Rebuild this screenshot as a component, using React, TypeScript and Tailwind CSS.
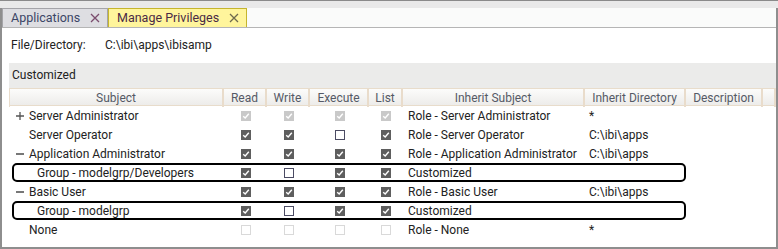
import React from "react";

type Cb = "c" | "u" | "dc" | "du";

function Check({ v }: { v: Cb }) {
  if (v === "c" || v === "dc") {
    const bg = v === "c" ? "bg-[#5e5e5e]" : "bg-[#c9c9c9]";
    return (
      <div className={`w-[10px] h-[10px] ${bg} flex items-center justify-center`}>
        <svg width="8" height="8" viewBox="0 0 8 8">
          <path d="M1.2 4.2 L3.2 6 L6.8 1.8" stroke="#fff" strokeWidth="1.4" fill="none" />
        </svg>
      </div>
    );
  }
  const bd = v === "u" ? "border-[#4b4b63]" : "border-[#d9d9d9]";
  return <div className={`w-[10px] h-[10px] bg-white border ${bd}`} />;
}

function XIcon({ color }: { color: string }) {
  return (
    <svg width="10" height="10" viewBox="0 0 10 10">
      <path d="M1 1 L9 9 M9 1 L1 9" stroke={color} strokeWidth="1.3" />
    </svg>
  );
}

const cols = "grid grid-cols-[215px_43px_43px_59px_34px_182px_101px_77px_13px]";

type Row = {
  mark?: "+" | "-";
  indent?: boolean;
  name: string;
  cb: [Cb, Cb, Cb, Cb];
  inh: string;
  dir: string;
  boxed?: boolean;
};

const rows: Row[] = [
  { mark: "+", name: "Server Administrator", cb: ["dc", "dc", "dc", "dc"], inh: "Role - Server Administrator", dir: "*" },
  { name: "Server Operator", cb: ["c", "c", "u", "c"], inh: "Role - Server Operator", dir: "C:\\ibi\\apps" },
  { mark: "-", name: "Application Administrator", cb: ["c", "c", "c", "c"], inh: "Role - Application Administrator", dir: "C:\\ibi\\apps" },
  { indent: true, name: "Group - modelgrp/Developers", cb: ["c", "u", "c", "c"], inh: "Customized", dir: "", boxed: true },
  { mark: "-", name: "Basic User", cb: ["c", "c", "c", "c"], inh: "Role - Basic User", dir: "C:\\ibi\\apps" },
  { indent: true, name: "Group - modelgrp", cb: ["c", "u", "c", "c"], inh: "Customized", dir: "", boxed: true },
  { name: "None", cb: ["du", "du", "du", "du"], inh: "Role - None", dir: "*" },
];

const headers = ["Subject", "Read", "Write", "Execute", "List", "Inherit Subject", "Inherit Directory", "Description", ""];

export default function App() {
  return (
    <div className="w-[778px] h-[249px] bg-white overflow-hidden font-['Roboto','Liberation_Sans',sans-serif] text-[12px] text-[#222]">
      <div className="h-[8px] border-t border-[#8a8a8a] bg-[#e9e9e9]" />
      <div className="h-[241px] border-l-2 border-r-2 border-b-2 border-[#8e8e8e] flex flex-col">
        {/* tab bar */}
        <div className="h-[20px] bg-[#fafbfa] border-b border-[#b5b5b5] flex items-stretch">
          <div className="w-[106px] bg-[#dedee2] border border-b-0 border-[#a4a4a8] flex items-center pl-[8px] pr-[7px] justify-between text-[12.5px] text-[#3b4666]">
            <span>Applications</span>
            <XIcon color="#7b4d6e" />
          </div>
          <div className="w-[139px] bg-[#fff59c] border border-b-0 border-[#c5b52e] flex items-center pl-[8px] pr-[7px] justify-between text-[12.5px] text-[#4a2a45]">
            <span>Manage Privileges</span>
            <XIcon color="#6e6a4e" />
          </div>
        </div>
        {/* file row */}
        <div className="h-[35px] pt-[10px] pl-[9px] flex leading-[14px]">
          <span className="w-[94px]">File/Directory:</span>
          <span>C:\ibi\apps\ibisamp</span>
        </div>
        {/* section */}
        <div className="ml-[7px]">
          <div className="h-[25px] bg-[#ebebea] flex items-center pl-[3px] pt-[-2px]">
            <span className="relative top-[-1px]">Customized</span>
          </div>
          <div className={`${cols} h-[18px] border-t border-b border-[#e8dccb] bg-linear-to-b from-[#fcfcfb] to-[#edecea] text-[#555a66]`}>
            {headers.map((h, i) => (
              <div
                key={i}
                className={`flex items-center justify-center border-r-2 border-[#e9dccb] ${i === 0 ? "border-l" : ""} ${i === 8 ? "border-r-0" : ""}`}
              >
                {h}
              </div>
            ))}
          </div>
          {rows.map((r, i) => (
            <div key={i} className={`${cols} h-[19px] items-center relative`}>
              <div className="flex items-center">
                <span className="w-[20px] flex justify-center pl-[2px] text-[#555]">
                  {r.mark === "+" ? (
                    <svg width="8" height="8" viewBox="0 0 8 8">
                      <path d="M0 4 H8 M4 0 V8" stroke="#555" strokeWidth="1.3" />
                    </svg>
                  ) : r.mark === "-" ? (
                    <svg width="8" height="8" viewBox="0 0 8 8">
                      <path d="M0 4 H8" stroke="#555" strokeWidth="1.6" />
                    </svg>
                  ) : null}
                </span>
                <span className={r.indent ? "pl-[8px]" : ""}>{r.name}</span>
              </div>
              {r.cb.map((c, j) => (
                <div key={j} className="flex justify-center">
                  <Check v={c} />
                </div>
              ))}
              <div className="pl-[5px] whitespace-nowrap">{r.inh}</div>
              <div className="pl-[4px]">{r.dir}</div>
              <div />
              <div />
              {r.boxed && (
                <div className="absolute left-[3px] top-0 w-[674px] h-[19px] border-2 border-black rounded-[5px] pointer-events-none" />
              )}
            </div>
          ))}
        </div>
      </div>
    </div>
  );
}
